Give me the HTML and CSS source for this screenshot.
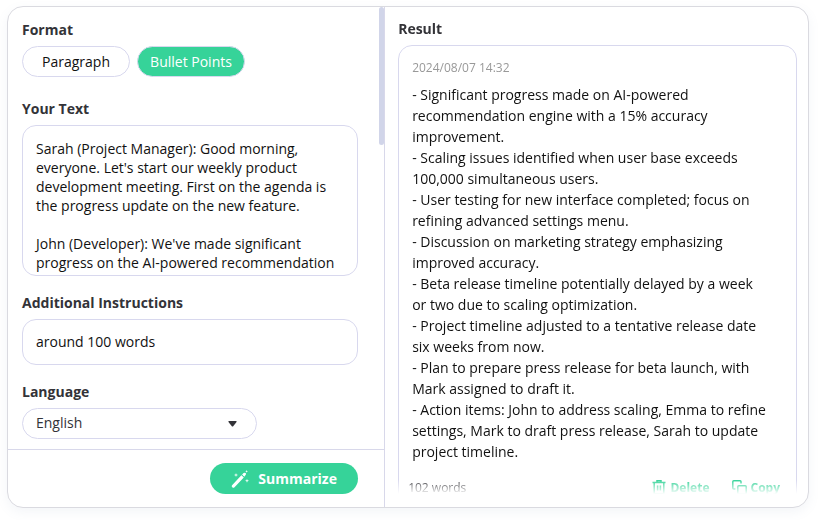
FILE: index.html
```html
<!DOCTYPE html>
<html lang="en">
<head>
    <meta charset="UTF-8">
    <meta name="viewport" content="width=device-width, initial-scale=1.0">
    <title>Summarize</title>
    <link rel="stylesheet" href="styles.css">
</head>
<body>
    <main class="panel">
        <form class="editor">
            <div class="editor-body">
                <div class="fields">
                    <div class="field field-format">
                        <h2 class="label" id="format-label">Format</h2>
                        <div class="formats" role="group" aria-labelledby="format-label">
                            <button class="pill" type="button">Paragraph</button>
                            <button class="pill active" type="button">Bullet Points</button>
                        </div>
                    </div>
                    <div class="field">
                        <label class="label" for="text">Your Text</label>
                        <textarea class="input text" id="text">Sarah (Project Manager): Good morning, everyone. Let's start our weekly product development meeting. First on the agenda is the progress update on the new feature.

John (Developer): We've made significant progress on the AI-powered recommendation</textarea>
                    </div>
                    <div class="field">
                        <label class="label" for="instructions">Additional Instructions</label>
                        <input class="input instructions" id="instructions" type="text" value="around 100 words">
                    </div>
                    <div class="field">
                        <label class="label" for="language">Language</label>
                        <div class="select">
                            <select class="input language" id="language">
                                <option>English</option>
                            </select>
                            <svg class="arrow" width="9" height="6" viewBox="0 0 9 6"><path d="M1 0h7q1 0 .5 1L5.2 5.2q-.7.8-1.4 0L.5 1Q0 0 1 0z" fill="#333338"/></svg>
                        </div>
                    </div>
                </div>
                <div class="scroll-thumb"></div>
            </div>
            <div class="editor-footer">
                <button class="summarize" type="button">
                    <svg width="18" height="18" viewBox="0 0 18 18" fill="#fff">
                        <path d="M10.4 5.2l2.4 2.4-9.3 9.6q-1.1 1-2.2 0t0-2.2z"/>
                        <path d="M11.1 4.5l1.5-1.4q1-.9 2 0t0 2l-1.3 1.7z"/>
                        <path d="M5 2.9l.5 1.6 1.6.5-1.6.5L5 7.1l-.5-1.6L2.9 5l1.6-.5z"/>
                        <path d="M16 8.7l.5 1.5 1.5.5-1.5.5-.5 1.5-.5-1.5-1.5-.5 1.5-.5z"/>
                        <path d="M15.6 0l.4 1 1 .4-1 .4-.4 1-.4-1-1-.4 1-.4z"/>
                    </svg>
                    <span>Summarize</span>
                </button>
            </div>
        </form>
        <section class="result">
            <h2 class="label">Result</h2>
            <article class="card">
                <time class="date">2024/08/07 14:32</time>
                <p class="summary">- Significant progress made on AI-powered recommendation engine with a 15% accuracy improvement.
- Scaling issues identified when user base exceeds 100,000 simultaneous users.
- User testing for new interface completed; focus on refining advanced settings menu.
- Discussion on marketing strategy emphasizing improved accuracy.
- Beta release timeline potentially delayed by a week or two due to scaling optimization.
- Project timeline adjusted to a tentative release date six weeks from now.
- Plan to prepare press release for beta launch, with Mark assigned to draft it.
- Action items: John to address scaling, Emma to refine settings, Mark to draft press release, Sarah to update project timeline.</p>
                <div class="card-footer">
                    <span class="count">102 words</span>
                    <button class="action" type="button">
                        <svg width="14" height="15" viewBox="0 0 14 15" fill="none" stroke="#36d399" stroke-width="1.5">
                            <path d="M.5 2.5h13M5 2.5V.8h4v1.7M2.2 2.5v11.2h9.6V2.5M5.6 5.5v5M8.4 5.5v5"/>
                        </svg>
                        <span>Delete</span>
                    </button>
                    <button class="action" type="button">
                        <svg width="15" height="15" viewBox="0 0 15 15" fill="none" stroke="#36d399" stroke-width="1.5">
                            <rect x="5.8" y="5.8" width="8.4" height="8.4" rx="1"/>
                            <path d="M3.4 9H1.8q-1 0-1-1V1.8q0-1 1-1H8q1 0 1 1v1.6"/>
                        </svg>
                        <span>Copy</span>
                    </button>
                </div>
            </article>
        </section>
    </main>
</body>
</html>
```

FILE: styles.css
```css
*{
    box-sizing: border-box;
}
body{
    margin: 0;
    height: 100vh;
    padding: 6px 11px 12px 7px;
    background-color: #fff;
    color: #333338;
    font-family: "Open Sans", "Noto Sans", sans-serif;
    font-size: 14px;
}
button, input, textarea, select{
    font: inherit;
}
button{
    cursor: pointer;
}
.panel{
    display: grid;
    grid-template-columns: 33fr 37fr;
    height: 100%;
    border: 1px solid #dadae0;
    border-radius: 16px;
    background-color: #fff;
    box-shadow: 0 4px 12px rgba(100, 130, 170, 0.08);
    overflow: hidden;
}
.editor{
    display: flex;
    flex-direction: column;
    min-height: 0;
    border-right: 1px solid #d8d8ea;
}
.editor-body{
    display: flex;
    flex: 1;
    min-height: 0;
    overflow: hidden;
}
.fields{
    display: flex;
    flex-direction: column;
    flex: 1;
    gap: 17px;
    padding: 13px 21px 0 14px;
}
.scroll-thumb{
    width: 5px;
    height: 138px;
    border-radius: 3px;
    background-color: #d1d5e9;
}
.field{
    display: flex;
    flex-direction: column;
    gap: 7px;
}
.field-format{
    padding-bottom: 5px;
}
.label{
    margin: 0;
    font-size: 14px;
    font-weight: 700;
    line-height: 19px;
}
.formats{
    display: flex;
    gap: 7px;
}
.pill{
    width: 108px;
    height: 31px;
    padding: 0;
    border: 1px solid #d8d8ee;
    border-radius: 16px;
    background-color: #fff;
    color: #111;
}
.active{
    background-color: #36d399;
    color: #fff;
}
.input{
    width: 100%;
    border: 1px solid #d8d8ee;
    border-radius: 14px;
    background-color: #fff;
    color: #111;
    outline: none;
}
.text{
    display: block;
    height: 151px;
    padding: 13px 13px 0;
    line-height: 19px;
    resize: none;
    overflow: hidden;
}
.instructions{
    height: 46px;
    padding: 0 13px 2px;
}
.select{
    display: grid;
    width: 235px;
    align-items: center;
}
.language{
    grid-area: 1 / 1;
    height: 31px;
    padding: 0 13px 2px;
    border-radius: 16px;
    color: #333338;
    appearance: none;
}
.arrow{
    grid-area: 1 / 1;
    justify-self: end;
    margin-right: 20px;
    pointer-events: none;
}
.editor-footer{
    display: flex;
    justify-content: flex-end;
    padding: 13px 26px;
    border-top: 1px solid #d8d8ea;
}
.summarize{
    display: flex;
    align-items: center;
    justify-content: center;
    gap: 9px;
    width: 148px;
    height: 31px;
    padding: 0;
    border: none;
    border-radius: 16px;
    background-color: #36d399;
    color: #fff;
    font-weight: 700;
}
.result{
    min-height: 0;
    margin-bottom: 13px;
    padding: 12px 11px 0 13px;
    overflow: hidden;
    mask-image: linear-gradient(to top, transparent, #000 14px);
}
.card{
    margin-top: 7px;
    padding: 12px 13px;
    border: 1px solid #d8d8ee;
    border-radius: 14px;
}
.date{
    display: block;
    color: #999;
    font-size: 12px;
    line-height: 19px;
}
.summary{
    margin: 7px 16px 15px 0;
    color: #111;
    line-height: 21px;
    white-space: pre-line;
}
.card-footer{
    display: flex;
    align-items: center;
    gap: 22px;
    margin: 0 3px 0 -4px;
}
.count{
    margin-right: auto;
    font-size: 12px;
}
.action{
    display: flex;
    align-items: center;
    gap: 4px;
    padding: 0;
    border: none;
    background: none;
    color: #36d399;
    font-size: 12px;
    font-weight: 700;
    line-height: 21px;
}
```
